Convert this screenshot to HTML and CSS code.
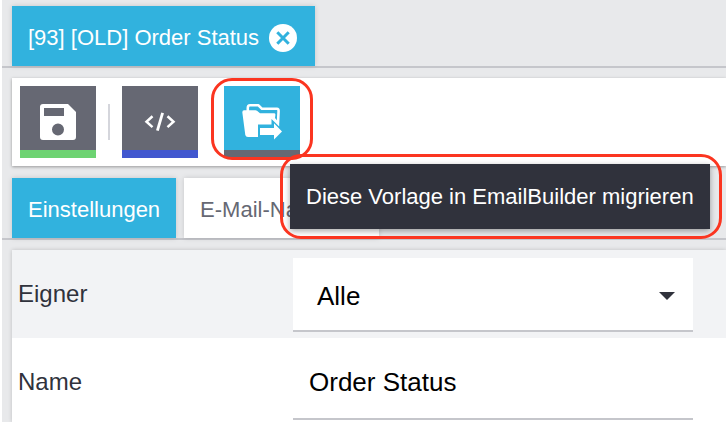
FILE: index.html
```html
<!DOCTYPE html>
<html lang="de">
<head>
<meta charset="utf-8">
<title>Order Status</title>
<link rel="stylesheet" href="styles.css">
</head>
<body>
<div class="app">
  <nav class="tabs tabs-main">
    <div class="tab tab-active tab-document">
      <span>[93] [OLD] Order Status</span>
      <svg class="close" viewBox="0 0 28 28"><circle cx="14" cy="14" r="14" fill="#fff"/><path d="M8.3 8.3 19.7 19.7M19.7 8.3 8.3 19.7" stroke="#31b2de" stroke-width="3"/></svg>
    </div>
  </nav>
  <div class="toolbar">
    <button class="tool tool-save" aria-label="Speichern">
      <svg viewBox="0 0 76 64"><path fill="#fff" fill-rule="evenodd" d="M23 18H48L56 26V51Q56 54 53 54H23Q20 54 20 51V21Q20 18 23 18ZM24 22V30H44V22ZM38 37.5A6 6 0 1 0 38 49.5A6 6 0 1 0 38 37.5Z"/></svg>
    </button>
    <span class="divider"></span>
    <button class="tool tool-code" aria-label="Code">
      <svg viewBox="0 0 76 64"><path fill="none" stroke="#fff" stroke-width="2.5" d="M30.5 30.3 24.5 35.7 30.5 41.1M45.5 30.3 51.5 35.7 45.5 41.1"/><path stroke="#fff" stroke-width="2.8" d="M40.6 26.8 35.4 44.6"/></svg>
    </button>
    <button class="tool tool-migrate" aria-label="Migrieren">
      <svg viewBox="0 0 76 64"><path fill="none" stroke="#fff" stroke-width="2.6" stroke-linejoin="round" d="M23.8 25V22Q23.8 19.3 26 19.3H34.5L38 22.8H53Q54.6 22.8 54.6 25L54 37"/><path fill="#fff" d="M20 24.2H31.5Q33 24.2 34.5 26L36 27.2H50Q51.6 27.2 51.4 29L51 32L55.2 37V40.5L47.5 33V38.5H34V51H24Q21.7 51 21.3 49L18.4 27Q18 24.2 20 24.2Z"/><path fill="#fff" d="M36 42H50V37.2L58 45.5 50 53.4V49H36Z"/></svg>
    </button>
    <div class="ring ring-button"></div>
  </div>
  <nav class="tabs tabs-sub">
    <div class="tab tab-active">Einstellungen</div>
    <div class="tab tab-second">E-Mail-Na</div>
    <div class="tooltip" role="tooltip">Diese Vorlage in EmailBuilder migrieren</div>
  </nav>
  <main class="panel">
    <div class="row row-shaded">
      <label>Eigner</label>
      <div class="field select"><span>Alle</span><svg class="caret" viewBox="0 0 16 8"><path d="M0 0H16L8 8Z" fill="#30323c"/></svg></div>
    </div>
    <div class="row">
      <label>Name</label>
      <div class="field">Order Status</div>
    </div>
  </main>
</div>
</body>
</html>
```
FILE: styles.css
```css
* { box-sizing: border-box; }
body {
  margin: 0;
  overflow: hidden;
  background: #fff;
  font-family: "Liberation Sans", Arial, sans-serif;
  font-size: 22px;
}
.app {
  height: 422px;
  margin-left: 2px;
  overflow: hidden;
  background: #e8e9eb;
}
.tabs {
  display: flex;
  gap: 8px;
  height: 62px;
  padding-left: 10px;
  border-bottom: 2px solid #c5c6cb;
}
.tabs-main { height: 68px; padding-top: 6px; }
.tabs-sub { position: relative; margin-top: 12px; }
.tab {
  display: flex;
  align-items: center;
  height: 60px;
  padding: 3px 16px 0;
  white-space: nowrap;
  color: #666873;
  background: #fff;
  box-shadow: 0 0 5px rgba(0, 0, 0, .15);
}
.tab-active { color: #fff; background: #31b2de; }
.tab-document { width: 303px; gap: 10px; }
.tab-second { width: 195px; }
.close { width: 28px; height: 28px; }
.toolbar {
  position: relative;
  display: flex;
  height: 88px;
  margin: 10px 0 0 10px;
  padding: 8px;
  background: #fff;
  box-shadow: 0 1px 3px rgba(0, 0, 0, .35);
}
.tool {
  width: 76px;
  height: 72px;
  padding: 0;
  border: 0;
  border-bottom: 8px solid;
  background: #666873;
}
.tool svg { display: block; width: 76px; height: 64px; }
.tool-save { border-color: #6dd372; }
.tool-code { border-color: #4258cf; }
.tool-migrate { margin-left: 26px; background: #31b2de; border-color: #666873; }
.divider { width: 2px; height: 36px; margin: 18px 12px; background: #d5d6dc; }
.ring {
  position: absolute;
  border: 3px solid #fb3520;
}
.ring-button { left: 199px; top: 0; width: 102px; height: 82px; border-radius: 21px; }
.tooltip {
  position: absolute;
  left: 288px;
  top: -14px;
  width: 420px;
  height: 65px;
  padding-left: 16px;
  line-height: 65px;
  white-space: nowrap;
  color: #fff;
  background: #30323c;
  box-shadow: 0 2px 6px rgba(0, 0, 0, .35);
}
.tooltip::after {
  content: "";
  position: absolute;
  inset: -10px -12px -10px -10px;
  border: 3px solid #fb3520;
  border-radius: 21px;
}
.panel {
  height: 172px;
  margin: 10px 0 0 10px;
  background: #fff;
  box-shadow: 0 0 4px rgba(0, 0, 0, .18);
}
.row {
  display: flex;
  height: 88px;
  padding: 8px 0 0 6px;
  color: #30323c;
  font-size: 24px;
}
.row-shaded { background: #f2f3f5; }
.row label { width: 275px; line-height: 72px; }
.field {
  width: 400px;
  height: 74px;
  padding: 0 16px;
  line-height: 73px;
  font-size: 26px;
  color: #000;
  background: #fff;
  border-bottom: 2px solid #c5c6cb;
}
.select {
  display: flex;
  align-items: center;
  justify-content: space-between;
  padding: 4px 18px 0 24px;
}
.caret { width: 16px; height: 8px; }
```
